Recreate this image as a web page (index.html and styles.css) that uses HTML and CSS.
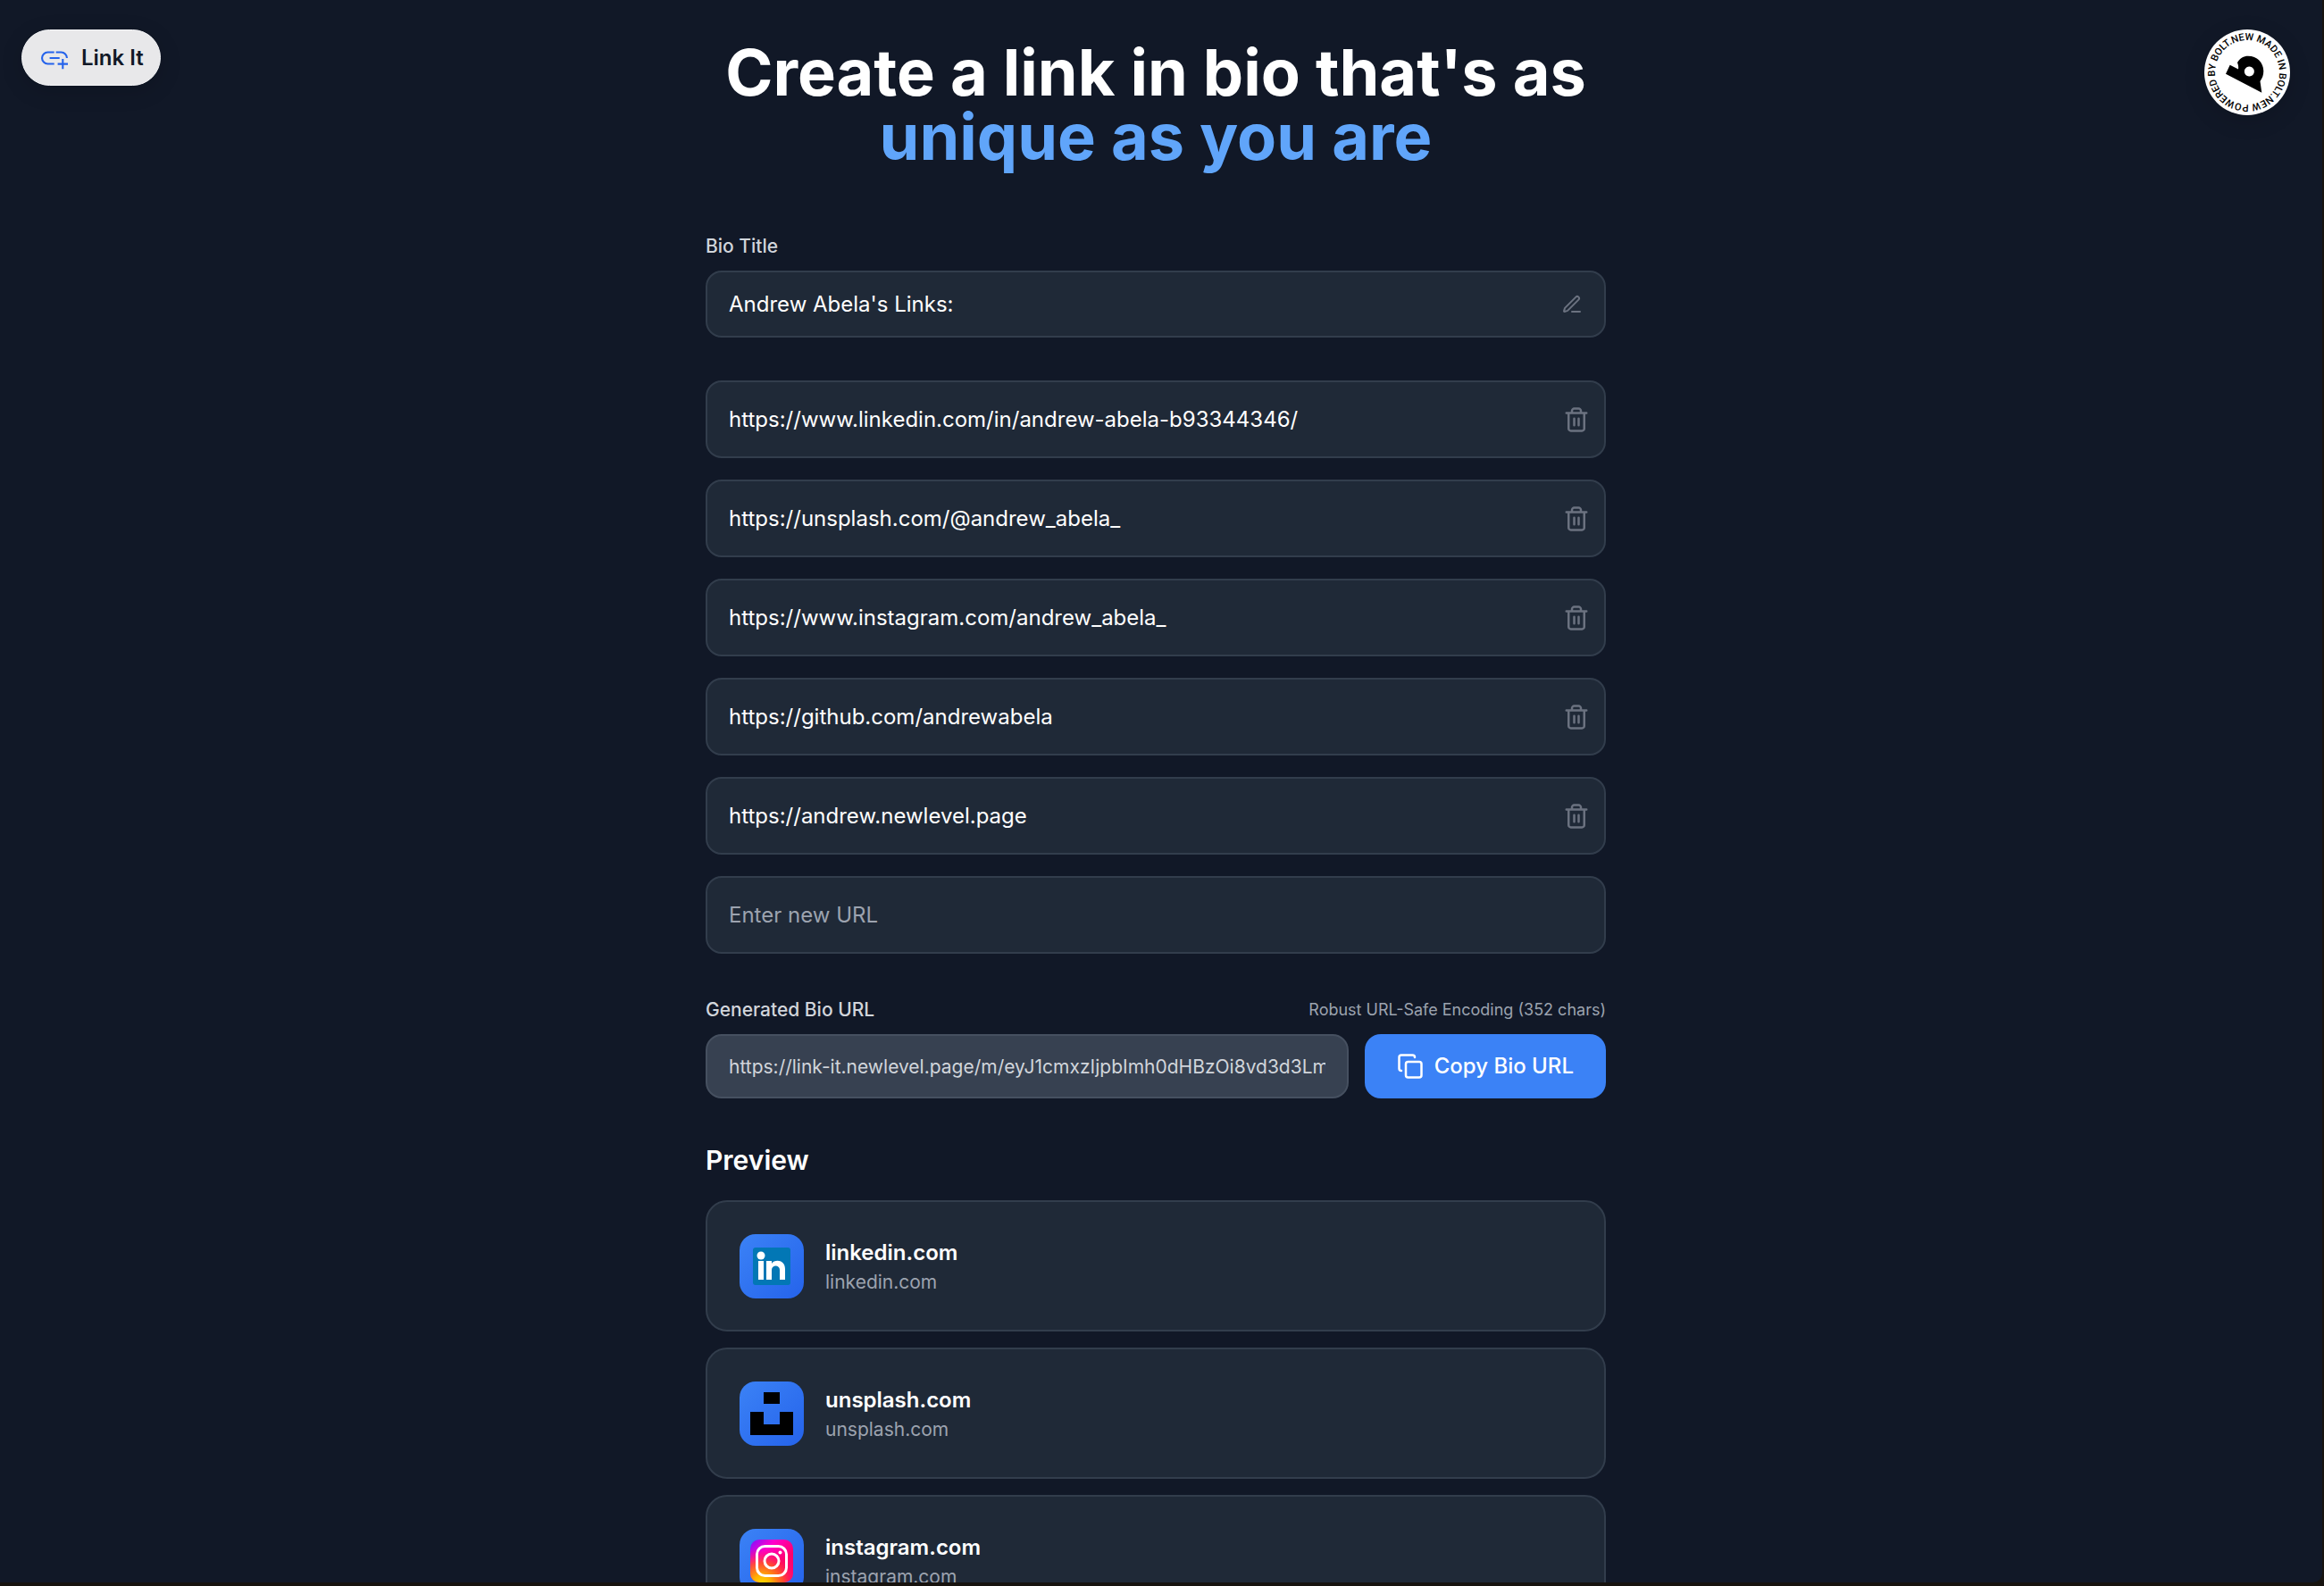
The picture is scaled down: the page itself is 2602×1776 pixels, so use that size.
FILE: index.html
```html
<!DOCTYPE html>
<html lang="en">
<head>
<meta charset="utf-8">
<meta name="viewport" content="width=device-width, initial-scale=1">
<title>Link It</title>
<link rel="stylesheet" href="styles.css">
</head>
<body>
<svg class="defs" aria-hidden="true">
  <symbol id="trash" viewBox="0 0 24 24"><path d="M3 6h18M19 6v14c0 1-1 2-2 2H7c-1 0-2-1-2-2V6M8 6V4c0-1 1-2 2-2h4c1 0 2 1 2 2v2M10 11v6M14 11v6"/></symbol>
</svg>
<div class="window">
  <a class="brand" href="#">
    <svg class="brand-icon" viewBox="0 0 24 24" aria-hidden="true"><path d="M11.800 7.700H7a4.300 4.300 0 0 0 0 8.600h4.800M13.100 7.700h3.900a4.300 4.300 0 0 1 4.300 4.300M8.400 12h7.400M18.200 12.600v7.600M14.400 16.400H22"/></svg>
    <span>Link It</span>
  </a>
  <a class="badge" href="#" aria-label="Made in Bolt.new">
    <svg viewBox="0 0 104 104">
      <defs><path id="ring" d="M13 52a39 39 0 1 1 78 0a39 39 0 1 1-78 0"/></defs>
      <circle cx="52" cy="52" r="52" fill="#fff"/>
      <text class="ring-text" transform="rotate(-7 52 52)"><textPath href="#ring">BY BOLT.NEW MADE IN BOLT.NEW POWERED</textPath></text>
      <svg viewBox="0 0 96 96" width="104" height="104"><path fill-rule="evenodd" d="M28.700 39.700L38 44.500C38.500 42 38 40 37 37C40 32 44 29.700 49 29.700C59 29.700 66.300 37 66.300 46.500C66.300 51 65 54.500 62.500 58L64.300 70.700L24 49.700ZM50.300 41.500a5.500 5.500 0 1 0 .1 0Z"/></svg>
    </svg>
  </a>
  <main class="column">
    <h1>Create a link in bio that's as <span class="accent">unique as you are</span></h1>

    <label class="label" for="title">Bio Title</label>
    <div class="field title-field">
      <input id="title" type="text" value="Andrew Abela's Links:">
      <svg class="icon pen" viewBox="0 0 24 24" aria-hidden="true"><path d="M12 20h9M16.376 3.622a1 1 0 0 1 3.002 3.002L7.368 18.635a2 2 0 0 1-.855.506l-2.872.838a.5.5 0 0 1-.62-.62l.838-2.872a2 2 0 0 1 .506-.854z"/></svg>
    </div>

    <div class="links">
      <div class="field"><input type="url" aria-label="Link 1" value="https://www.linkedin.com/in/andrew-abela-b93344346/"><button class="remove" type="button" aria-label="Remove link 1"><svg class="icon"><use href="#trash"/></svg></button></div>
      <div class="field"><input type="url" aria-label="Link 2" value="https://unsplash.com/@andrew_abela_"><button class="remove" type="button" aria-label="Remove link 2"><svg class="icon"><use href="#trash"/></svg></button></div>
      <div class="field"><input type="url" aria-label="Link 3" value="https://www.instagram.com/andrew_abela_"><button class="remove" type="button" aria-label="Remove link 3"><svg class="icon"><use href="#trash"/></svg></button></div>
      <div class="field"><input type="url" aria-label="Link 4" value="https://github.com/andrewabela"><button class="remove" type="button" aria-label="Remove link 4"><svg class="icon"><use href="#trash"/></svg></button></div>
      <div class="field"><input type="url" aria-label="Link 5" value="https://andrew.newlevel.page"><button class="remove" type="button" aria-label="Remove link 5"><svg class="icon"><use href="#trash"/></svg></button></div>
      <div class="field"><input type="url" aria-label="New link" placeholder="Enter new URL"></div>
    </div>

    <div class="generated-head">
      <label class="label" for="generated">Generated Bio URL</label>
      <span class="note">Robust URL-Safe Encoding (352 chars)</span>
    </div>
    <div class="generated">
      <input id="generated" type="text" readonly value="https://link-it.newlevel.page/m/eyJ1cmxzIjpbImh0dHBzOi8vd3d3LmxpbmtlZGluLmNvbS9pbi9hbmRyZXct">
      <button class="copy" type="button"><svg class="icon" viewBox="0 0 24 24" aria-hidden="true"><rect x="8" y="8" width="14" height="14" rx="2"/><path d="M4 16c-1.100 0-2-.9-2-2V4c0-1.100.9-2 2-2h10c1.100 0 2 .9 2 2"/></svg>Copy Bio URL</button>
    </div>

    <h2>Preview</h2>
    <div class="cards">
      <a class="card" href="#">
        <span class="tile"><svg viewBox="0 0 48 48" aria-hidden="true"><rect x="3" y="3" width="42" height="42" rx="3" fill="#0277b5"/><circle cx="12" cy="12" r="4.500" fill="#fff"/><path fill="#fff" d="M9 18h6v21H9zM18 18h6v3c3-5 15-5 15 6v12h-6V28c0-6-9-6-9 0v11h-6z"/></svg></span>
        <span class="card-text"><strong>linkedin.com</strong><span>linkedin.com</span></span>
      </a>
      <a class="card" href="#">
        <span class="tile"><svg viewBox="0 0 48 48" aria-hidden="true"><path d="M15 0h18v13H15zM0 22h15v14h18V22h15v26H0z"/></svg></span>
        <span class="card-text"><strong>unsplash.com</strong><span>unsplash.com</span></span>
      </a>
      <a class="card" href="#">
        <span class="tile"><svg viewBox="0 0 48 48" aria-hidden="true">
          <defs>
            <linearGradient id="ig" x1="0" y1="0" x2="1" y2="1"><stop offset="0" stop-color="#7a12ff"/><stop offset=".3" stop-color="#f0c"/><stop offset=".65" stop-color="#ff0069"/><stop offset="1" stop-color="#ff0a78"/></linearGradient>
            <radialGradient id="glow" cx=".27" cy="1.05" r=".85"><stop offset="0" stop-color="#fd0"/><stop offset=".25" stop-color="#ffb300"/><stop offset=".6" stop-color="#ff5a1e" stop-opacity=".8"/><stop offset="1" stop-color="#ff0069" stop-opacity="0"/></radialGradient>
          </defs>
          <rect width="48" height="48" rx="10" fill="url(#ig)"/><rect width="48" height="48" rx="10" fill="url(#glow)"/>
          <g fill="none" stroke="#fff" stroke-width="3"><rect x="7.500" y="7.500" width="33" height="33" rx="9"/><circle cx="24" cy="24" r="8"/></g><circle cx="33.500" cy="14.500" r="2" fill="#fff"/></svg></span>
        <span class="card-text"><strong>instagram.com</strong><span>instagram.com</span></span>
      </a>
    </div>
  </main>
</div>
</body>
</html>
```
FILE: styles.css
```css
* { box-sizing: border-box; }
body {
  margin: 0;
  height: 100vh;
  padding: 0 2px 4px 0;
  overflow: hidden;
  background: #17130f;
  color: #fff;
  font-family: Inter, "Liberation Sans", sans-serif;
  font-size: 24px;
  line-height: 36px;
}
input, button { font: inherit; color: inherit; }
a { color: inherit; text-decoration: none; }
.defs { position: absolute; width: 0; height: 0; }

.window {
  position: relative;
  height: 100%;
  overflow: hidden;
  padding: 45px 36px 0 24px;
  background: #111827;
  border-bottom-right-radius: 10px;
}
.brand {
  position: absolute;
  top: 33px;
  left: 24px;
  display: flex;
  align-items: center;
  gap: 12px;
  height: 63px;
  padding: 0 18px;
  border: 1px solid #f3f4f6;
  border-radius: 32px;
  background: #e8e8ea;
  color: #111827;
  font-weight: 600;
  box-shadow: 0 6px 24px rgba(0, 0, 0, .15);
}
.brand-icon { width: 36px; height: 36px; fill: none; stroke: #2563eb; stroke-width: 1.4; }
.badge {
  position: absolute;
  top: 33px;
  right: 36px;
  width: 96px;
  height: 96px;
  border-radius: 50%;
  box-shadow: 0 6px 24px rgba(0, 0, 0, .15);
}
.badge svg { display: block; width: 100%; height: 100%; }
.ring-text { font-family: Roboto, sans-serif; font-size: 12px; font-weight: 500; }

.column { max-width: 1008px; margin: 0 auto; }
h1 {
  margin: 0 0 72px;
  font-size: 72px;
  line-height: 72px;
  font-weight: 700;
  text-align: center;
}
.accent { display: block; color: #60a5fa; }
.label { display: block; color: #d1d5db; font-size: 21px; line-height: 30px; font-weight: 500; }

.field {
  display: flex;
  align-items: center;
  height: 87px;
  padding: 0 10px 0 24px;
  border: 2px solid #323d4c;
  border-radius: 18px;
  background: #1f2937;
}
.field input { flex: 1; min-width: 0; padding: 0; border: 0; outline: 0; background: none; }
.field input::placeholder { color: #9ca3af; opacity: 1; }
.title-field { height: 75px; margin: 12px 0 48px; padding-right: 24px; }
.icon { display: block; width: 30px; height: 30px; fill: none; stroke: currentColor; stroke-width: 2; stroke-linecap: round; stroke-linejoin: round; }
.pen { width: 24px; height: 24px; color: #6b7280; }
.remove { padding: 6px; border: 0; background: none; color: #6b7280; }
.links { display: grid; gap: 24px; }

.generated-head { display: flex; justify-content: space-between; align-items: center; margin: 48px 0 12px; }
.note { color: #9ca3af; font-size: 18px; line-height: 24px; }
.generated { display: flex; gap: 18px; }
.generated input {
  flex: 1;
  min-width: 0;
  height: 72px;
  padding: 0 24px;
  border: 2px solid #465060;
  border-radius: 18px;
  background: #374151;
  color: #d1d5db;
  font-size: 21px;
}
.copy {
  display: flex;
  align-items: center;
  gap: 12px;
  padding: 0 36px;
  border: 0;
  border-radius: 18px;
  background: #3b82f6;
  font-weight: 500;
}
h2 { margin: 48px 0 24px; font-size: 30px; line-height: 42px; font-weight: 600; }

.cards { display: grid; gap: 18px; }
.card {
  display: flex;
  align-items: center;
  gap: 24px;
  height: 147px;
  padding: 0 36px;
  border: 2px solid #323d4c;
  border-radius: 24px;
  background: #1f2937;
}
.tile {
  display: grid;
  place-items: center;
  width: 72px;
  height: 72px;
  border-radius: 18px;
  background: linear-gradient(135deg, #3b82f6, #2563eb);
}
.tile svg { width: 48px; height: 48px; }
.card-text { display: grid; color: #9ca3af; font-size: 21px; line-height: 30px; }
.card-text strong { color: #fff; font-size: 24px; line-height: 36px; font-weight: 600; }
```
